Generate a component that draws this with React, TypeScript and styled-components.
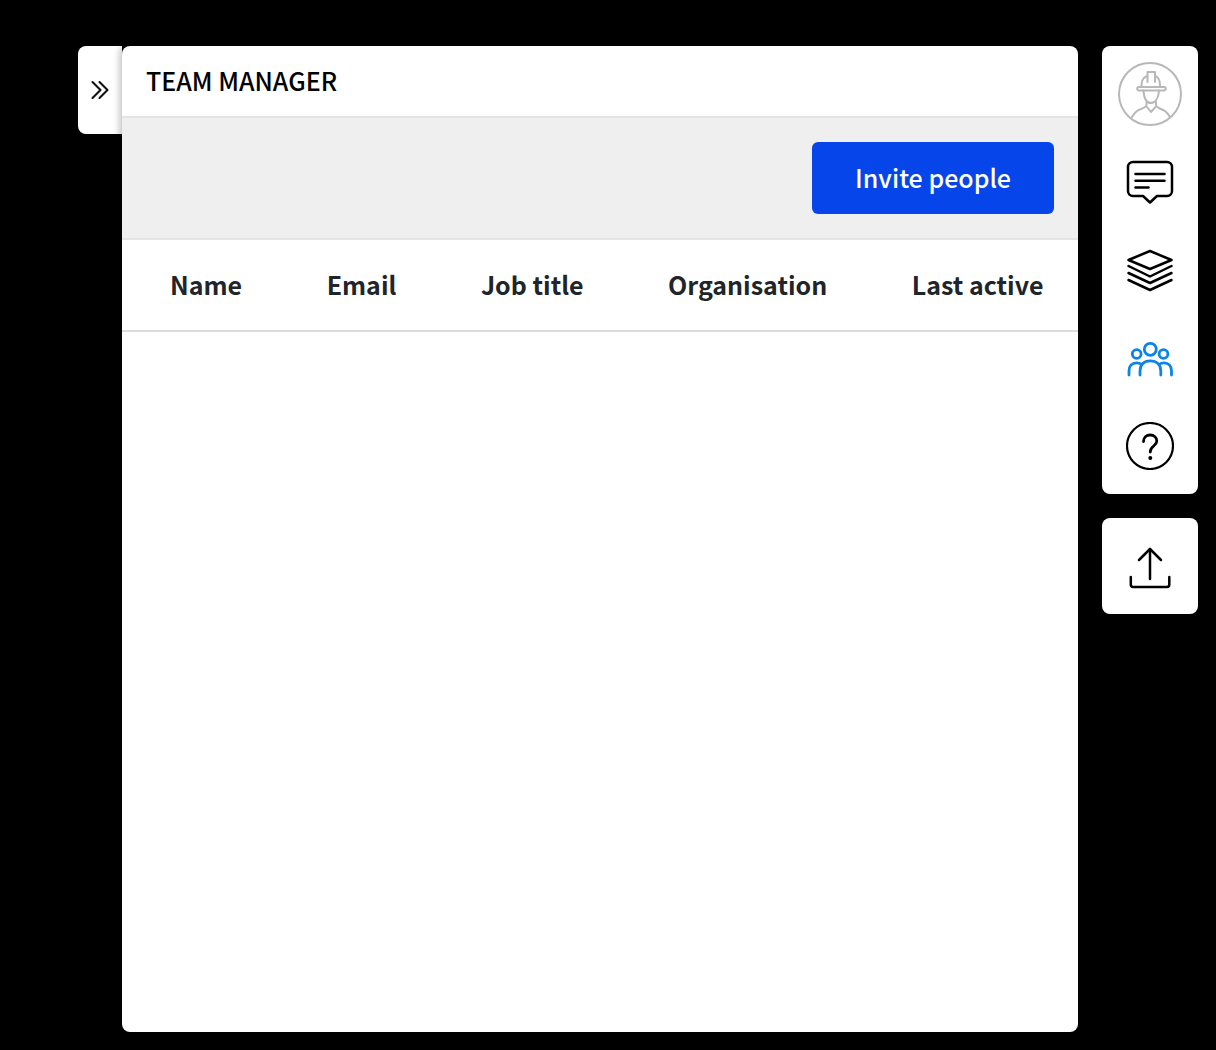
import React from "react";
import styled, { createGlobalStyle } from "styled-components";

const Global = createGlobalStyle`
  html, body { margin: 0; padding: 0; background: #000; }
  body { font-family: "Noto Sans CJK JP", "Noto Sans", sans-serif; }
`;

const Page = styled.div`
  width: 1216px;
  height: 1050px;
  box-sizing: border-box;
  padding: 46px 18px 18px 78px;
  display: flex;
  align-items: flex-start;
  background: #000;
  overflow: hidden;
`;

const ExpandTab = styled.button`
  width: 44px;
  height: 88px;
  flex: none;
  border: 0;
  padding: 0;
  background: #fff;
  border-radius: 8px 0 0 8px;
  display: flex;
  align-items: center;
  justify-content: center;
`;

const Panel = styled.main`
  width: 956px;
  height: 986px;
  flex: none;
  background: #fff;
  border-radius: 8px;
  overflow: hidden;
  box-shadow: -3px 0 6px rgba(0, 0, 0, 0.22);
  position: relative;
`;

const PanelHeader = styled.header`
  height: 70px;
  padding: 0 24px 2px;
  box-sizing: content-box;
  height: 68px;
  display: flex;
  align-items: center;
  font-size: 25px;
  font-weight: 500;
  line-height: 1;
  color: #000;
  border-bottom: 2px solid #e4e4e4;
`;

const Toolbar = styled.div`
  height: 120px;
  box-sizing: border-box;
  padding: 24px;
  background: #efefef;
  display: flex;
  justify-content: flex-end;
`;

const InviteButton = styled.button`
  width: 242px;
  height: 72px;
  border: 0;
  border-radius: 6px;
  padding: 0 0 2px;
  background: #0645ea;
  color: #fff;
  font-family: inherit;
  font-size: 25px;
  font-weight: 500;
`;

const TableHead = styled.div`
  height: 94px;
  box-sizing: border-box;
  padding: 0 0 2px 48px;
  display: flex;
  align-items: center;
  gap: 84.5px;
  border-top: 2px solid #e4e4e4;
  border-bottom: 2px solid #dcdcdc;
`;

const HeadCell = styled.span`
  font-size: 25px;
  font-weight: 700;
  line-height: 1;
  color: #212529;
  white-space: nowrap;
`;

const Rail = styled.aside`
  width: 96px;
  margin-left: 24px;
  flex: none;
  display: flex;
  flex-direction: column;
  gap: 24px;
`;

const RailCard = styled.nav`
  background: #fff;
  border-radius: 8px;
  padding: 16px 0 24px;
  display: flex;
  flex-direction: column;
  align-items: center;
`;

const IconStack = styled.div`
  padding-top: 32px;
  display: flex;
  flex-direction: column;
  gap: 40px;
`;

const UploadCard = styled.div`
  height: 96px;
  background: #fff;
  border-radius: 8px;
  display: flex;
  align-items: center;
  justify-content: center;
`;

const Icon = styled.svg<{ $color?: string; $w?: number }>`
  display: block;
  width: 48px;
  height: 48px;
  fill: none;
  stroke: ${(p) => p.$color ?? "#000"};
  stroke-width: ${(p) => p.$w ?? 2.5};
  stroke-linecap: round;
  stroke-linejoin: round;
`;

const AvatarIcon = styled.svg`
  display: block;
  width: 64px;
  height: 64px;
  fill: none;
  stroke: #b8b8b8;
  stroke-width: 2;
  stroke-linecap: round;
  stroke-linejoin: round;
`;

const ChevronIcon = styled.svg`
  display: block;
  width: 20px;
  height: 22px;
  fill: none;
  stroke: #111;
  stroke-width: 2.1;
  stroke-linecap: round;
  stroke-linejoin: round;
`;

export default function App() {
  return (
    <Page>
      <Global />
      <ExpandTab aria-label="Expand">
        <ChevronIcon viewBox="0 0 20 22">
          <path d="M2.5 3 L10.5 11 L2.5 19" />
          <path d="M9.5 3 L17.5 11 L9.5 19" />
        </ChevronIcon>
      </ExpandTab>
      <Panel>
        <PanelHeader>TEAM MANAGER</PanelHeader>
        <Toolbar>
          <InviteButton>Invite people</InviteButton>
        </Toolbar>
        <TableHead>
          <HeadCell>Name</HeadCell>
          <HeadCell>Email</HeadCell>
          <HeadCell>Job title</HeadCell>
          <HeadCell>Organisation</HeadCell>
          <HeadCell>Last active</HeadCell>
        </TableHead>
      </Panel>
      <Rail>
        <RailCard>
          <AvatarIcon viewBox="0 0 64 64">
            <circle cx="32" cy="32" r="31" />
            <path d="M21 25 H46 a1.8 1.8 0 0 1 0 3.600 H21 a1.8 1.8 0 0 1 0 -3.600 Z" />
            <path d="M23.500 25 V23 C23.500 18 26 15 29.500 14 M42 25 V23 C42 18 40 15 37 14" />
            <path d="M29.500 20 V10 H37 V20" />
            <path d="M25.500 28.600 C26 36 28.500 41 33 41 C37.500 41 40.500 36 41 28.600" />
            <path d="M28.500 40 V43 C28.500 46 22 47 19 49 C16.500 51 15 53 14 55" />
            <path d="M38 40 V43 C38 46 44 47 47 49 C49.500 51 51 53 52 55" />
            <path d="M29 45 L33 50 L37.500 45" />
          </AvatarIcon>
          <IconStack>
            <Icon viewBox="0 0 48 48">
              <path d="M7 4 H41 a5 5 0 0 1 5 5 V33 a5 5 0 0 1 -5 5 H31 L24 44.500 L17 38 H7 a5 5 0 0 1 -5 -5 V9 a5 5 0 0 1 5 -5 Z" />
              <path d="M9.500 16 H38.500 M9.500 22.800 H38.500 M9.500 29.500 H22.500" />
            </Icon>
            <Icon viewBox="0 0 48 48">
              <path d="M2.500 14 L24 5 L45.500 14 L24 23 Z" />
              <path d="M2.500 20 L24 30.500 L45.500 20" />
              <path d="M2.500 27 L24 37 L45.500 27" />
              <path d="M2.500 34 L24 44 L45.500 34" />
            </Icon>
            <Icon viewBox="0 0 48 48" $color="#0a84e8" $w={2.800}>
              <circle cx="24.300" cy="15.300" r="6" />
              <circle cx="10.700" cy="20" r="4.400" />
              <circle cx="37.500" cy="20" r="4.400" />
              <path d="M14 41 V37 C14 30.500 18 26.800 24.300 26.800 C30.500 26.800 34.800 30.500 34.800 37 V41" />
              <path d="M3 41 V37 C3 32 6 28.800 10.500 28.800 C12.500 28.800 14.300 29.500 15.700 30.500" />
              <path d="M45.500 41 V37 C45.500 32 42.500 28.800 38 28.800 C36 28.800 34.300 29.500 33 30.500" />
            </Icon>
            <Icon viewBox="0 0 48 48" $w={2.200}>
              <circle cx="24" cy="24" r="23" />
              <path d="M17.500 19.500 C17.500 15.500 20.500 13 24.200 13 C28 13 30.800 15.500 30.800 19 C30.800 24 24.300 24 24.300 29.500 V30" strokeWidth="2.800" />
              <circle cx="24.300" cy="36" r="1.300" strokeWidth="1.400" fill="#000" />
            </Icon>
          </IconStack>
        </RailCard>
        <UploadCard>
          <Icon viewBox="0 0 48 48">
            <path d="M24 7 V37" />
            <path d="M13 18 L24 7 L35 18" />
            <path d="M4.800 35 V42.500 a2.500 2.500 0 0 0 2.500 2.500 H40.800 a2.500 2.500 0 0 0 2.500 -2.500 V35" />
          </Icon>
        </UploadCard>
      </Rail>
    </Page>
  );
}
